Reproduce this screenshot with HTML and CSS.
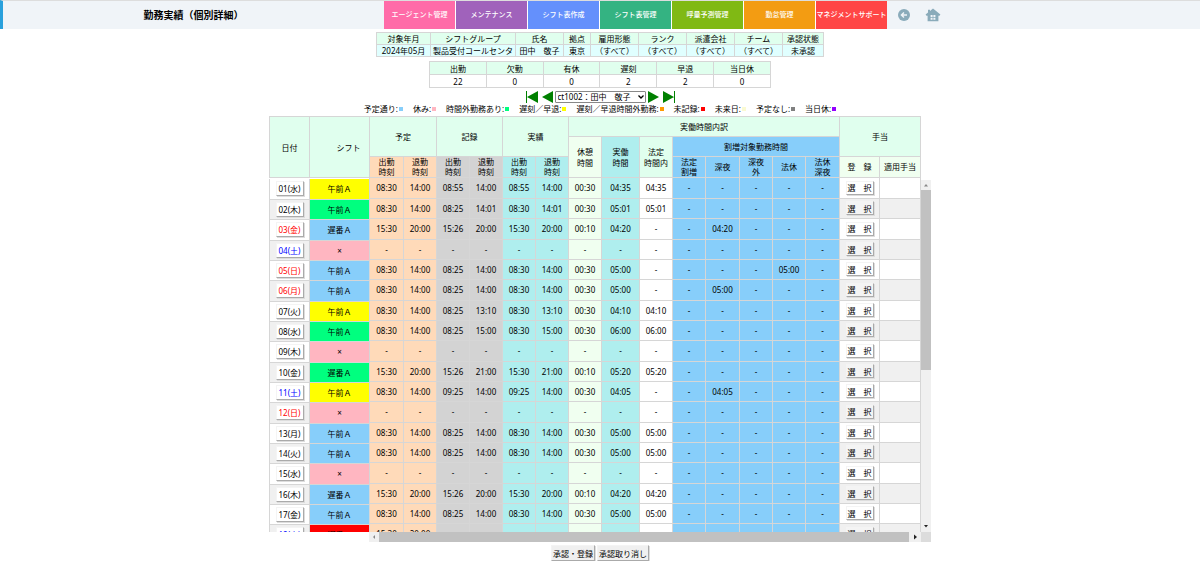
FILE: index.html
```html
<!DOCTYPE html>
<html lang="ja">
<head>
<meta charset="utf-8">
<title>勤務実績（個別詳細）</title>
<link rel="stylesheet" href="styles.css">
</head>
<body>
<header class="topbar">
  <h1 class="title">勤務実績（個別詳細）</h1>
  <nav class="menu">
    <a class="menu-item pink" href="#">エージェント管理</a>
    <a class="menu-item purple" href="#">メンテナンス</a>
    <a class="menu-item blue" href="#">シフト表作成</a>
    <a class="menu-item green" href="#">シフト表管理</a>
    <a class="menu-item lime" href="#">呼量予測管理</a>
    <a class="menu-item orange" href="#">勤怠管理</a>
    <a class="menu-item red" href="#">マネジメントサポート</a>
  </nav>
  <div class="tools">
    <a class="tool" href="#" aria-label="戻る">
      <svg width="12" height="12" viewBox="0 0 12 12"><circle cx="6" cy="6" r="6" fill="#8aabba"/><path d="M9 6H3.6M6 3.4 3.4 6 6 8.6" fill="none" stroke="#f0f4f8" stroke-width="1.4"/></svg>
    </a>
    <a class="tool" href="#" aria-label="ホーム">
      <svg width="16" height="14" viewBox="0 0 16 14"><path d="M8 .5 15.4 6.6 14.5 7.7H13.4V13.2H2.6V7.7H1.5L.6 6.6 3 4.6V1.8H5V3z" fill="#8aabba"/><path d="M5.6 7h2v2h-2zM8.4 7h2v2h-2zM5.6 9.8h2v2h-2zM8.4 9.8h2v2h-2z" fill="#f0f4f8"/></svg>
    </a>
  </div>
</header>
<main class="page">
  <table class="summary info">
    <thead><tr><th class="w54">対象年月</th><th class="w85">シフトグループ</th><th class="w48">氏名</th><th class="w27">拠点</th><th class="w48">雇用形態</th><th class="w48">ランク</th><th class="w48">派遣会社</th><th class="w48">チーム</th><th class="w41">承認状態</th></tr></thead>
    <tbody><tr><td>2024年05月</td><td>製品受付コールセンタ</td><td>田中　敬子</td><td>東京</td><td>（すべて）</td><td>（すべて）</td><td>（すべて）</td><td>（すべて）</td><td>未承認</td></tr></tbody>
  </table>
  <table class="summary counts">
    <thead><tr><th>出勤</th><th>欠勤</th><th>有休</th><th>遅刻</th><th>早退</th><th>当日休</th></tr></thead>
    <tbody><tr><td>22</td><td>0</td><td>0</td><td>2</td><td>2</td><td>0</td></tr></tbody>
  </table>
  <div class="picker">
    <button class="arrow" aria-label="最初"><svg width="12" height="12" viewBox="0 0 12 12"><path d="M0 0h1v12H0zM12 0v12L1 6z" fill="#008000"/></svg></button>
    <button class="arrow" aria-label="前へ"><svg width="11" height="12" viewBox="0 0 11 12"><path d="M11 0v12L0 6z" fill="#008000"/></svg></button>
    <span class="agent-box">
      <select class="agent" aria-label="エージェント"><option>ct1002：田中　敬子</option></select>
      <svg class="agent-mark" width="6" height="4" viewBox="0 0 6 4"><path d="M.5.5 3 3 5.5.5" fill="none" stroke="#000" stroke-width="1.3"/></svg>
    </span>
    <button class="arrow" aria-label="次へ"><svg width="11" height="12" viewBox="0 0 11 12"><path d="M0 0v12L11 6z" fill="#008000"/></svg></button>
    <button class="arrow" aria-label="最後"><svg width="12" height="12" viewBox="0 0 12 12"><path d="M11 0h1v12h-1zM0 0v12L11 6z" fill="#008000"/></svg></button>
  </div>
  <ul class="legend">
    <li>予定通り:<i class="chip on"></i></li>
    <li>休み:<i class="chip off"></i></li>
    <li>時間外勤務あり:<i class="chip over"></i></li>
    <li>遅刻／早退:<i class="chip late"></i></li>
    <li>遅刻／早退時間外勤務:<i class="chip lateover"></i></li>
    <li>未記録:<i class="chip none"></i></li>
    <li>未来日:<i class="chip future"></i></li>
    <li>予定なし:<i class="chip noplan"></i></li>
    <li>当日休:<i class="chip dayoff"></i></li>
  </ul>
  <div class="sheet">
    <div class="left">
      <table class="grid">
        <colgroup><col class="w40"><col class="w60"></colgroup>
        <thead><tr class="head-all"><th>日付</th><th class="shift-head">シフト</th></tr></thead>
      </table>
      <div class="view">
        <table class="grid days">
          <colgroup><col class="w40"><col class="w60"></colgroup>
          <tbody id="days"></tbody>
        </table>
      </div>
    </div>
    <div class="right">
      <div class="upper">
        <div class="columns">
          <table class="grid">
            <colgroup><col class="w34"><col class="w33"><col class="w33"><col class="w33"><col class="w33"><col class="w33"><col class="w33"><col class="w38"><col class="w33"><col class="w33"><col class="w34"><col class="w33"><col class="w33"><col class="w34"><col class="w40"><col class="w41"></colgroup>
            <thead>
              <tr class="head-a"><th colspan="2" rowspan="2">予定</th><th colspan="2" rowspan="2">記録</th><th colspan="2" rowspan="2">実績</th><th colspan="8">実働時間内訳</th><th colspan="2" rowspan="2">手当</th></tr>
              <tr class="head-b"><th rowspan="2" class="rest">休憩<br>時間</th><th rowspan="2" class="fact">実働<br>時間</th><th rowspan="2">法定<br>時間内</th><th colspan="5" class="extra">割増対象勤務時間</th></tr>
              <tr class="head-c"><th class="plan">出勤<br>時刻</th><th class="plan">退勤<br>時刻</th><th class="log">出勤<br>時刻</th><th class="log">退勤<br>時刻</th><th class="fact">出勤<br>時刻</th><th class="fact">退勤<br>時刻</th><th class="extra">法定<br>割増</th><th class="extra">深夜</th><th class="extra">深夜<br>外</th><th class="extra">法休</th><th class="extra">法休<br>深夜</th><th class="rest">登　録</th><th class="rest">適用手当</th></tr>
            </thead>
          </table>
          <div class="view">
            <table class="grid times">
              <colgroup><col class="w34"><col class="w33"><col class="w33"><col class="w33"><col class="w33"><col class="w33"><col class="w33"><col class="w38"><col class="w33"><col class="w33"><col class="w34"><col class="w33"><col class="w33"><col class="w34"><col class="w40"><col class="w41"></colgroup>
              <tbody id="times"></tbody>
            </table>
          </div>
        </div>
        <div class="vbar">
          <svg width="10" height="10" viewBox="0 0 10 10"><path d="M3 6.5 5 4l2 2.5z" fill="#888"/></svg>
          <div class="vthumb"></div>
          <div class="space"></div>
          <svg width="10" height="10" viewBox="0 0 10 10"><path d="M3 3h4L5 5.5z" fill="#222"/></svg>
        </div>
      </div>
      <div class="hbar">
        <svg width="10" height="10" viewBox="0 0 10 10"><path d="M6 3 4 5l2 2z" fill="#888"/></svg>
        <div class="hthumb"></div>
        <svg width="12" height="10" viewBox="0 0 12 10"><path d="M5 2.5 8 5 5 7.5z" fill="#222"/></svg>
        <div class="corner"></div>
      </div>
    </div>
  </div>
  <div class="actions">
    <button class="raised">承認・登録</button>
    <button class="raised">承認取り消し</button>
  </div>
</main>
<script src="app.js"></script>
</body>
</html>
```

FILE: styles.css
```css
* { box-sizing: border-box; }
body {
  margin: 0;
  background: #fff;
  color: #000;
  font: 8px/11px "Noto Sans", "Noto Sans CJK JP", sans-serif;
}
button, select { font: inherit; color: inherit; }
button { padding: 0; white-space: nowrap; }
svg { display: block; }

.topbar {
  display: flex;
  align-items: stretch;
  height: 29px;
  border-top: 1px solid #ddd;
  border-left: 3px solid #29a0dc;
  background: #f0f4f8;
}
.title {
  display: flex;
  align-items: center;
  justify-content: center;
  width: 381px;
  margin: 0;
  padding-bottom: 1px;
  font-size: 10px;
  line-height: 14px;
}
.menu { display: flex; gap: 1px; background: #fff; }
.menu-item {
  display: flex;
  align-items: center;
  justify-content: center;
  width: 71px;
  padding-bottom: 1px;
  color: #fff;
  font-size: 7px;
  font-weight: 500;
  text-decoration: none;
  white-space: nowrap;
}
.pink { background: #ff6ba8; }
.purple { background: #a062bb; }
.blue { background: #6490fc; }
.green { background: #34b382; }
.lime { background: #80b914; }
.orange { background: #f39c12; }
.red { background: #ff4646; }
.tools { display: flex; align-items: center; gap: 15px; padding-left: 11px; }

.page {
  display: flex;
  flex-direction: column;
  align-items: center;
  padding-top: 3px;
}
table { border-collapse: collapse; table-layout: fixed; }
th, td {
  padding: 0;
  border: 1px solid #d6d6d6;
  font-weight: 400;
  text-align: center;
  white-space: nowrap;
}
.summary th { background: #e0ffee; }
.info { width: 448px; }
.info td { background: #e0ffff; }
.info tr { height: 12px; }
.counts { width: 342px; margin-top: 4px; }
.counts tr { height: 13px; }

.picker { display: flex; align-items: center; gap: 4px; height: 12px; margin-top: 3px; }
.arrow { border: 0; background: none; }
.agent-box { position: relative; display: flex; width: 91px; margin: 0 -2px; }
.agent {
  appearance: none;
  width: 100%;
  height: 12px;
  padding: 0 0 0 2px;
  border: 1px solid #888;
  border-radius: 1px;
  background: #fff;
  line-height: 10px;
}
.agent-mark { position: absolute; right: 2px; top: 4px; pointer-events: none; }
.legend {
  display: flex;
  gap: 10px;
  margin: 0;
  padding: 0 0 3px;
  list-style: none;
}
.legend li { display: flex; align-items: center; gap: 1px; height: 10px; }
.chip { width: 4px; height: 4px; margin-top: 1px; }

.on, .extra { background: #87cefa; }
.off { background: #ffb6c1; }
.over { background: #00ff7f; }
.late { background: #ffff00; }
.lateover { background: #ff9900; }
.none { background: #ff0000; }
.future { background: #fafad2; }
.noplan { background: #808080; }
.dayoff { background: #9400ff; }

.sheet { display: flex; }
.left { width: 100px; }
.left .grid { width: 101px; }
.upper { display: flex; }
.columns { width: 552px; }
.columns .grid { width: 552px; }
.view { height: 354px; overflow: hidden; }
.grid th { background: #e0ffee; }
.grid .plan { background: #ffdab9; }
.grid .log { background: #d3d3d3; }
.grid .fact { background: #afeeee; }
.grid .rest { background: #f0fff0; }
.grid .extra { background: #87cefa; }
.grid .shift-head { padding-left: 18px; }
.head-all { height: 61px; }
.head-a, .head-b { height: 20px; }
.head-c { height: 21px; line-height: 10px; }
.view .grid td { border-top: 0; }
.view .grid tr { height: 20px; }
.view .grid tr:nth-child(3n) { height: 21px; }
.days tr:nth-child(even) td, .times tr:nth-child(even) .allow { background-color: #f0f0f0; }
.days tr .shift.on { background: #87cefa; }
.days tr .shift.off { background: #ffb6c1; }
.days tr .shift.over { background: #00ff7f; }
.days tr .shift.late { background: #ffff00; }
.days tr .shift.none { background: #ff0000; }
.left .view { padding-top: 1px; }

.w27 { width: 27px; }
.w33 { width: 33px; }
.w34 { width: 34px; }
.w38 { width: 38px; }
.w40 { width: 40px; }
.w41 { width: 41px; }
.w48 { width: 48px; }
.w54 { width: 54px; }
.w60 { width: 60px; }
.w85 { width: 85px; }

.raised {
  height: 16px;
  padding: 0 1px;
  border: 1px solid #f4f4f4;
  border-right-color: #aaa;
  border-bottom-color: #aaa;
  background: #f0f0f0;
  box-shadow: 1px 1px 0 #ddd;
}
.cell-button { display: block; width: 28px; height: 15px; margin: 0 auto; padding: 0; background: #fff; }
.allow .cell-button { height: 14px; }
.times tr:nth-child(even) .cell-button { background: #f4f4f4; }
.sat { color: #0000ff; }
.sun { color: #ff0000; }

.vbar {
  display: flex;
  flex-direction: column;
  width: 10px;
  margin-top: 64px;
  background: #f0f0f0;
}
.vthumb { flex: 180; background: #c1c1c1; }
.space { flex: 152; }
.hbar { display: flex; height: 10px; background: #f0f0f0; }
.hthumb { flex: 1; background: #c1c1c1; }
.corner { width: 10px; background: #dcdcdc; }

.actions { display: flex; gap: 2px; margin-top: 3px; }
```

FILE: app.js
```js
// date, day class, shift, status, plan, record, actual, rest, worked, legal, premium[5]
const rows = [
  ["01(水)", "", "午前Ａ", "late", "08:30 14:00 08:55 14:00 08:55 14:00 00:30 04:35 04:35 - - - - -"],
  ["02(木)", "", "午前Ａ", "over", "08:30 14:00 08:25 14:01 08:30 14:01 00:30 05:01 05:01 - - - - -"],
  ["03(金)", "sun", "遅番Ａ", "on", "15:30 20:00 15:26 20:00 15:30 20:00 00:10 04:20 - - 04:20 - - -"],
  ["04(土)", "sat", "×", "off", "- - - - - - - - - - - - - -"],
  ["05(日)", "sun", "午前Ａ", "on", "08:30 14:00 08:25 14:00 08:30 14:00 00:30 05:00 - - - - 05:00 -"],
  ["06(月)", "sun", "午前Ａ", "on", "08:30 14:00 08:25 14:00 08:30 14:00 00:30 05:00 - - 05:00 - - -"],
  ["07(火)", "", "午前Ａ", "late", "08:30 14:00 08:25 13:10 08:30 13:10 00:30 04:10 04:10 - - - - -"],
  ["08(水)", "", "午前Ａ", "over", "08:30 14:00 08:25 15:00 08:30 15:00 00:30 06:00 06:00 - - - - -"],
  ["09(木)", "", "×", "off", "- - - - - - - - - - - - - -"],
  ["10(金)", "", "遅番Ａ", "over", "15:30 20:00 15:26 21:00 15:30 21:00 00:10 05:20 05:20 - - - - -"],
  ["11(土)", "sat", "午前Ａ", "late", "08:30 14:00 09:25 14:00 09:25 14:00 00:30 04:05 - - 04:05 - - -"],
  ["12(日)", "sun", "×", "off", "- - - - - - - - - - - - - -"],
  ["13(月)", "", "午前Ａ", "on", "08:30 14:00 08:25 14:00 08:30 14:00 00:30 05:00 05:00 - - - - -"],
  ["14(火)", "", "午前Ａ", "on", "08:30 14:00 08:25 14:00 08:30 14:00 00:30 05:00 05:00 - - - - -"],
  ["15(水)", "", "×", "off", "- - - - - - - - - - - - - -"],
  ["16(木)", "", "遅番Ａ", "on", "15:30 20:00 15:26 20:00 15:30 20:00 00:10 04:20 04:20 - - - - -"],
  ["17(金)", "", "午前Ａ", "on", "08:30 14:00 08:25 14:00 08:30 14:00 00:30 05:00 05:00 - - - - -"],
  ["18(土)", "sat", "遅番Ａ", "none", "15:30 20:00 - - - - - - - - - - - -"]
];
const kinds = ["plan", "plan", "log", "log", "fact", "fact", "rest", "fact", "legal",
  "extra", "extra", "extra", "extra", "extra"];

document.getElementById("days").innerHTML = rows.map(([date, day, shift, status]) =>
  `<tr><td><button class="raised cell-button ${day}">${date}</button></td><td class="shift ${status}">${shift}</td></tr>`
).join("");

document.getElementById("times").innerHTML = rows.map(row =>
  "<tr>" + row[4].split(" ").map((t, i) => `<td class="${kinds[i]}">${t}</td>`).join("") +
  `<td class="allow"><button class="raised cell-button">選　択</button></td><td class="allow"></td></tr>`
).join("");
```
